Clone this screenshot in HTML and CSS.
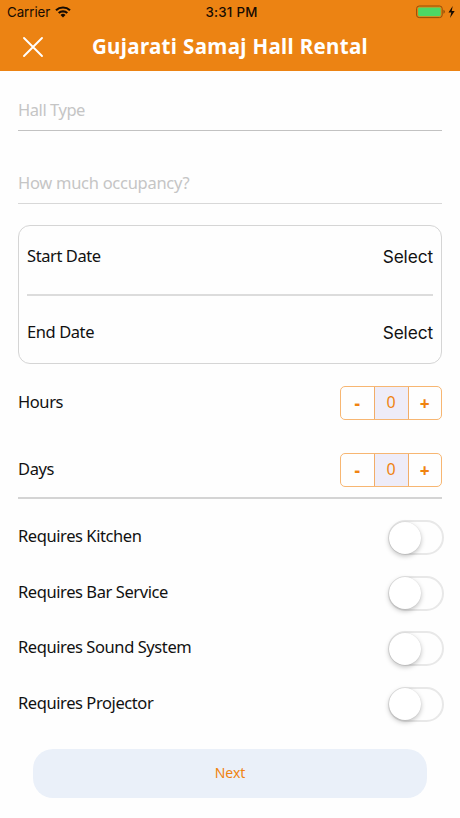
FILE: index.html
```html
<!DOCTYPE html>
<html lang="en">
<head>
<meta charset="utf-8">
<title>Gujarati Samaj Hall Rental</title>
<link rel="stylesheet" href="styles.css">
</head>
<body>
<header class="header">
  <div class="status">
    <div class="status-left"><span>Carrier</span>
      <svg class="wifi" width="16" height="12" viewBox="0 0 16 12"><g fill="none" stroke="#160b02" stroke-width="2.1"><path d="M1 4.3a10.2 10.2 0 0 1 14 0"/><path d="M3.7 7.1a6.3 6.3 0 0 1 8.6 0"/></g><path d="M8 11.5 5.5 9a3.6 3.6 0 0 1 5 0z" fill="#160b02"/></svg>
    </div>
    <span class="time">3:31 PM</span>
    <div class="status-right">
      <svg width="40" height="14" viewBox="0 0 40 14"><rect x=".6" y="1" width="25.6" height="11.6" rx="2.6" fill="none" stroke="#925009"/><rect x="2.1" y="2.4" width="22.6" height="8.8" rx="1.4" fill="#4cd865"/><path d="M27.4 4.8q1.5.6 1.5 2t-1.5 2z" fill="#925009"/><path d="M36.7 1 32.5 7.6h2.8L34 13l4.7-6.9h-3z" fill="#160b02"/></svg>
    </div>
  </div>
  <div class="nav">
    <svg class="close" width="22" height="22" viewBox="0 0 22 22"><path d="M2 2 20 20M20 2 2 20" stroke="#fff" stroke-width="1.9" stroke-linecap="round"/></svg>
    <h1>Gujarati Samaj Hall Rental</h1>
  </div>
</header>
<main>
  <div class="field first"><span class="hall">Hall Type</span></div>
  <div class="field second"><span class="occupancy">How much occupancy?</span></div>
  <section class="dates">
    <div class="date-row"><span class="label">Start Date</span><span class="select">Select</span></div>
    <div class="date-row"><span class="label">End Date</span><span class="select">Select</span></div>
  </section>
  <section class="counts">
    <div class="count-row"><span class="label">Hours</span>
      <div class="stepper"><b>-</b><span class="value">0</span><b>+</b></div></div>
    <div class="count-row"><span class="label">Days</span>
      <div class="stepper"><b>-</b><span class="value">0</span><b>+</b></div></div>
  </section>
  <section class="options">
    <div class="option"><span class="label">Requires Kitchen</span><span class="toggle"></span></div>
    <div class="option"><span class="label">Requires Bar Service</span><span class="toggle"></span></div>
    <div class="option"><span class="label">Requires Sound System</span><span class="toggle"></span></div>
    <div class="option"><span class="label">Requires Projector</span><span class="toggle"></span></div>
  </section>
  <button class="next">Next</button>
</main>
</body>
</html>
```
FILE: styles.css
```css
* { box-sizing: border-box; }
body {
  margin: 0;
  height: 818px;
  overflow: hidden;
  background: #fefefe;
  color: #111;
  font-family: "Noto Sans", sans-serif;
  font-size: 16.5px;
}
.header { height: 71px; background: #ec8313; }
.status {
  height: 24px;
  display: grid;
  grid-template-columns: 1fr auto 1fr;
  align-items: center;
  padding: 0 4px 0 7px;
  color: #160b02;
  font: 13.3px/24px Inter, sans-serif;
}
.status-left { display: flex; align-items: center; gap: 5px; letter-spacing: -.05px; }
.wifi { display: block; }
.time { font-weight: 500; letter-spacing: .25px; }
.status-right { display: flex; justify-content: flex-end; }
.nav { height: 47px; display: grid; grid-template-columns: 66px 1fr 66px; align-items: center; padding-bottom: 2px; }
.close { justify-self: center; }
h1 {
  margin: 0 0 2px;
  text-align: center;
  white-space: nowrap;
  color: #fff;
  font-size: 20.5px;
  line-height: 30px;
  font-weight: 700;
  letter-spacing: .35px;
}
main { padding: 0 18px; }
.field { color: #c5c5c5; border-bottom: 1px solid #c2c2c2; line-height: 24px; }
.hall { letter-spacing: -.45px; }
.occupancy { letter-spacing: -.28px; }
.first { height: 60px; padding-top: 27px; }
.second { height: 73px; padding-top: 40px; border-color: #d8d8d8; }
.dates {
  height: 139px;
  margin-top: 21px;
  padding: 0 8px;
  border: 1px solid #d5d5d5;
  border-radius: 12px;
}
.date-row { height: 68px; display: flex; justify-content: space-between; padding-top: 18px; line-height: 24px; }
.date-row + .date-row { border-top: 2px solid #dcdcdc; padding-top: 24px; }
.select { font-family: Inter, sans-serif; font-size: 17.3px; line-height: 25px; letter-spacing: -.1px; }
.label { white-space: nowrap; line-height: 24px; letter-spacing: -.42px; }
.counts { height: 135px; padding-top: 22px; border-bottom: 2px solid #d4d4d4; }
.count-row { height: 67px; display: flex; justify-content: space-between; }
.count-row .label { padding-top: 4px; }
.stepper {
  width: 102px;
  height: 34px;
  display: grid;
  grid-template-columns: 1fr 35px 1fr;
  overflow: hidden;
  border: 1px solid #f7b672;
  border-radius: 5px;
  color: #f08310;
  text-align: center;
  font-size: 17px;
  line-height: 34px;
}
.value { background: #eeecf8; border: solid #f2ad68; border-width: 0 1px; font-size: 16px; line-height: 30px; }
.stepper b { font-weight: 800; }
.options { padding-top: 21px; margin-right: -2px; }
.option { height: 55.6px; display: flex; justify-content: space-between; }
.option .label { padding-top: 4px; }
.toggle {
  width: 56px;
  height: 35px;
  border: 2px solid #e8e8e8;
  border-radius: 18px;
}
.toggle::before {
  content: "";
  display: block;
  width: 32px;
  height: 32px;
  margin: -.5px 0 0 -1px;
  border-radius: 50%;
  background: #fff;
  box-shadow: 0 2px 5px rgba(0, 0, 0, .25), 0 0 1px rgba(0, 0, 0, .12);
}
.next {
  display: block;
  width: 394px;
  height: 49px;
  margin: 7px auto 0;
  padding: 0 0 2px;
  border: 0;
  border-radius: 20px;
  background: #eaf0f9;
  color: #f08310;
  font: 14px/20px "Noto Sans", sans-serif;
}
```
